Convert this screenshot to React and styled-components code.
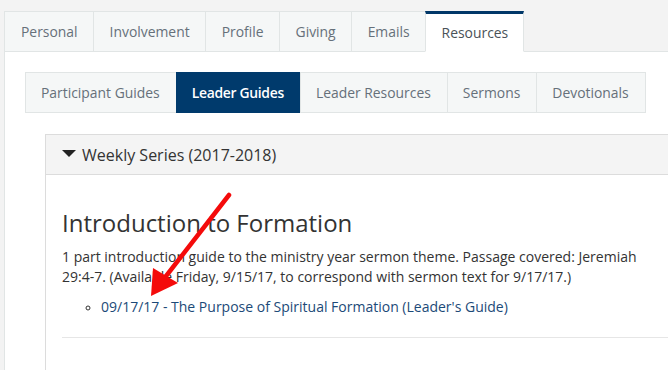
import styled, { createGlobalStyle } from "styled-components";

const GlobalStyle = createGlobalStyle`
  html, body {
    margin: 0;
    background: #f3f3f3;
    font-family: "Open Sans", "Liberation Sans", sans-serif;
    overflow: hidden;
  }
`;

const mainTabs = ["Personal", "Involvement", "Profile", "Giving", "Emails", "Resources"];
const subTabs = ["Participant Guides", "Leader Guides", "Leader Resources", "Sermons", "Devotionals"];

const App = () => {
  return (
    <>
      <GlobalStyle />
      <Page>
        <TabBar>
          {mainTabs.map((t) => (
            <Tab key={t} $active={t === "Resources"}>
              {t}
            </Tab>
          ))}
        </TabBar>
        <Panel>
          <SubTabBar>
            {subTabs.map((t) => (
              <SubTab key={t} $active={t === "Leader Guides"}>
                {t}
              </SubTab>
            ))}
          </SubTabBar>
          <Collapse>
            <CollapseHeader>
              <Caret />
              Weekly Series (2017-2018)
            </CollapseHeader>
            <CollapseBody>
              <Title>Introduction to Formation</Title>
              <Desc>
                1 part introduction guide to the ministry year sermon theme. Passage covered: Jeremiah
                29:4-7. (Available Friday, 9/15/17, to correspond with sermon text for 9/17/17.)
              </Desc>
              <GuideList>
                <li>
                  <a href="#">09/17/17 - The Purpose of Spiritual Formation (Leader's Guide)</a>
                </li>
              </GuideList>
              <Rule />
            </CollapseBody>
          </Collapse>
        </Panel>
        <Arrow width="668" height="370" viewBox="0 0 668 370">
          <line x1="229" y1="195" x2="163" y2="280" stroke="#f40b0b" strokeWidth="4.5" strokeLinecap="round" />
          <polygon points="151,296 153,268 178,283" fill="#f40b0b" />
        </Arrow>
      </Page>
    </>
  );
};

export default App;

const Page = styled.div`
  position: relative;
  height: 370px;
  overflow: hidden;
  padding: 11px 0 0 4px;
  box-sizing: border-box;
  display: flex;
  flex-direction: column;
`;

const TabBar = styled.div`
  display: flex;
  align-items: flex-end;
`;

const Tab = styled.div`
  flex-shrink: 0;
  white-space: nowrap;
  height: 41px;
  box-sizing: border-box;
  padding: 0 15px 0 16px;
  display: flex;
  align-items: center;
  font-size: 13.9px;
  color: ${(p) => (p.$active ? "#4a5258" : "#66707a")};
  background: ${(p) => (p.$active ? "#fff" : "#f5f7f7")};
  border: 1px solid #e1e5e5;
  border-top: ${(p) => (p.$active ? "3px solid #003768" : "1px solid #e1e5e5")};
  border-bottom: ${(p) => (p.$active ? "1px solid #fff" : "1px solid #e1e5e5")};
  margin-left: -1px;
  margin-bottom: -1px;
  position: relative;
  z-index: ${(p) => (p.$active ? 1 : 0)};
  &:first-child {
    margin-left: 0;
  }
`;

const Panel = styled.div`
  flex: 1;
  background: #fff;
  border-top: 1px solid #e1e5e5;
  border-left: 1px solid #e1e5e5;
  padding: 20px 0 0 20px;
  box-sizing: border-box;
  display: flex;
  flex-direction: column;
`;

const SubTabBar = styled.div`
  display: flex;
`;

const SubTab = styled.div`
  flex-shrink: 0;
  white-space: nowrap;
  height: 41px;
  box-sizing: border-box;
  padding: 0 16px 0 15px;
  display: flex;
  align-items: center;
  font-size: 13.9px;
  color: ${(p) => (p.$active ? "#fff" : "#66707a")};
  background: ${(p) => (p.$active ? "#003a6c" : "#f5f7f7")};
  border: 1px solid ${(p) => (p.$active ? "#003a6c" : "#e1e5e5")};
  margin-left: -1px;
  font-weight: ${(p) => (p.$active ? 600 : 400)};
  letter-spacing: ${(p) => (p.$active ? "-0.3px" : "0")};
  &:first-child {
    margin-left: 0;
  }
`;

const Collapse = styled.div`
  flex: 1;
  margin: 21px 0 0 20px;
  border-left: 1px solid #dcdcdc;
  border-top: 1px solid #dcdcdc;
`;

const CollapseHeader = styled.div`
  height: 40px;
  box-sizing: border-box;
  display: flex;
  align-items: center;
  gap: 6px;
  padding-left: 16px;
  background: #f4f4f4;
  border-bottom: 1px solid #dcdcdc;
  font-size: 16px;
  color: #333;
`;

const Caret = styled.span`
  width: 0;
  height: 0;
  border-left: 7px solid transparent;
  border-right: 7px solid transparent;
  border-top: 7px solid #222;
  margin-top: -2px;
`;

const CollapseBody = styled.div`
  padding: 31px 0 0 16px;
`;

const Title = styled.h2`
  margin: 0;
  font-size: 24px;
  font-weight: 400;
  color: #333;
  line-height: 34px;
`;

const Desc = styled.p`
  margin: 7px 0 0;
  font-size: 14px;
  line-height: 20px;
  color: #333;
  width: 590px;
`;

const GuideList = styled.ul`
  margin: 10px 0 0;
  padding-left: 39px;
  list-style: circle;
  font-size: 14px;
  line-height: 20px;
  color: #333;
  li::marker {
    font-size: 11px;
  }
  a {
    color: #1c4a78;
    text-decoration: none;
  }
`;

const Rule = styled.div`
  margin-top: 20px;
  border-top: 1px solid #e6e6e6;
`;

const Arrow = styled.svg`
  position: absolute;
  left: 0;
  top: 0;
  pointer-events: none;
`;
